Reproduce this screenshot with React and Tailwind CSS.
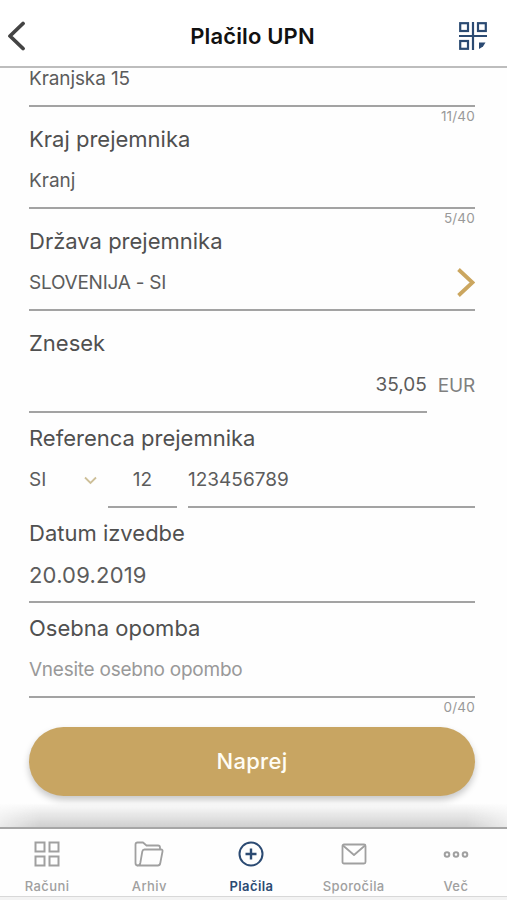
import React, { useState } from 'react';
import clsx from 'clsx';

const QrIcon = () => (
  <svg width="28" height="28" viewBox="0 0 28 28" fill="none" stroke="#2b4a72" strokeWidth="2.2">
    <rect x="1.2" y="1.2" width="7.800" height="7.800" />
    <rect x="19" y="1.2" width="7.800" height="7.800" />
    <rect x="1.2" y="19" width="7.800" height="7.800" />
    <path d="M14 0v28M0 14h28" />
    <path d="M20 20.5h6.500l-2.500 4l-4 2.500z" fill="#2b4a72" stroke="none" />
  </svg>
);

const GridIcon = () => (
  <svg width="26" height="26" viewBox="0 0 26 26" fill="none" stroke="currentColor" strokeWidth="2">
    <rect x="1.500" y="1.500" width="9" height="9" />
    <rect x="15.500" y="1.500" width="9" height="9" />
    <rect x="1.500" y="15.500" width="9" height="9" />
    <rect x="15.500" y="15.500" width="9" height="9" />
  </svg>
);

const FolderIcon = () => (
  <svg width="30" height="26" viewBox="0 0 30 26" fill="none" stroke="currentColor" strokeWidth="1.800" strokeLinejoin="round">
    <path d="M4 24.500C2 24.500 1.500 23.500 1.500 22V3.500C1.500 2 2.200 1.500 3.500 1.500H9L12.500 4.500H24C25.500 4.500 26 5.200 26 6.500V8.500" />
    <path d="M4 24.500C5.500 24.500 6 23.500 6.300 22L8.300 10.500C8.600 9 9 8.500 10.500 8.500H27C28.300 8.500 28.800 9.200 28.500 10.500L26.300 22C26 23.800 25.300 24.500 23.800 24.500Z" />
  </svg>
);

const PlusIcon = () => (
  <svg width="26" height="26" viewBox="0 0 26 26" fill="none" stroke="currentColor" strokeWidth="2">
    <circle cx="13" cy="13" r="11.500" />
    <path d="M13 7.500v11M7.500 13h11" strokeWidth="2.400" />
  </svg>
);

const MailIcon = () => (
  <svg width="26" height="26" viewBox="0 0 26 26" fill="none" stroke="currentColor" strokeWidth="1.800" strokeLinejoin="round">
    <rect x="1.500" y="3.500" width="23" height="19" rx="1.500" />
    <path d="M2 4.500L13 14L24 4.500" />
  </svg>
);

const DotsIcon = () => (
  <svg width="26" height="26" viewBox="0 0 26 26" fill="none" stroke="currentColor" strokeWidth="2">
    <circle cx="4" cy="13.500" r="2.300" />
    <circle cx="13" cy="13.500" r="2.300" />
    <circle cx="22" cy="13.500" r="2.300" />
  </svg>
);

const tabs = [
  { id: 'racuni', label: 'Računi', icon: GridIcon },
  { id: 'arhiv', label: 'Arhiv', icon: FolderIcon },
  { id: 'placila', label: 'Plačila', icon: PlusIcon },
  { id: 'sporocila', label: 'Sporočila', icon: MailIcon },
  { id: 'vec', label: 'Več', icon: DotsIcon },
];

const Label = ({ children, className }) => (
  <div className={clsx('h-[28px] leading-[28px] text-[22px] text-[#505050] whitespace-nowrap', className)}>{children}</div>
);

const Value = ({ children, className }) => (
  <div className={clsx('flex items-center h-[56px] pt-[2px] border-b-2 border-[#a3a3a3] whitespace-nowrap', className)}>
    {children}
  </div>
);

const Counter = ({ children }) => (
  <div className="h-[18px] leading-[18px] text-right text-[13.5px] tracking-[0.2px] text-[#999999]">{children}</div>
);

const App = () => {
  const [activeTab, setActiveTab] = useState('placila');

  return (
    <div className="w-[507px] h-[900px] flex flex-col overflow-hidden bg-[#fefefe] font-['Inter',sans-serif]">
      {/* Header */}
      <header className="h-[68px] shrink-0 grid grid-cols-[1fr_auto_1fr] items-center pt-[6px] pl-[7px] pr-5 bg-white border-b-2 border-[#bdbdbd]">
        <button className="justify-self-start">
          <svg width="20" height="30" viewBox="0 0 20 30" fill="none" stroke="#444444" strokeWidth="3.800" strokeLinecap="round" strokeLinejoin="round">
            <path d="M16 2.500L3 15L16 27.500" />
          </svg>
        </button>
        <h1 className="pl-[11px] text-[22px] font-semibold tracking-[0.15px] text-[#111111]">Plačilo UPN</h1>
        <button className="justify-self-end pb-px"><QrIcon /></button>
      </header>

      {/* Payment form */}
      <main className="flex-1 min-h-0 pl-[29px] pr-[32px] text-[19px] text-[#5c5c5c]">
        <Value className="-mt-[17px] tracking-[-0.1px]">Kranjska 15</Value>
        <Counter>11/40</Counter>

        <Label>Kraj prejemnika</Label>
        <Value>Kranj</Value>
        <Counter>5/40</Counter>

        <Label>Država prejemnika</Label>
        <Value className="justify-between tracking-[-0.25px]">
          SLOVENIJA - SI
          <svg width="18" height="30" viewBox="0 0 18 30" fill="none" stroke="#cba65f" strokeWidth="3.800">
            <path d="M1.500 1.500L15.500 14.500L1.500 27.500" />
          </svg>
        </Value>

        <Label className="mt-[18px]">Znesek</Label>
        <div className="flex">
          <Value className="flex-1 justify-end">35,05</Value>
          <div className="flex items-center h-[56px] pt-[2px] pl-[11px] tracking-[-0.2px] text-[#808080]">EUR</div>
        </div>

        <Label className="mt-[11px]">Referenca prejemnika</Label>
        <div className="flex">
          <div className="w-[79px] h-[56px] pt-[1px] flex items-center justify-between pr-[11px]">
            SI
            <svg width="13" height="9" viewBox="0 0 13 9" fill="none" stroke="#cdbf98" strokeWidth="1.800">
              <path d="M1 1.500L6.500 7L12 1.500" />
            </svg>
          </div>
          <Value className="w-[69px] justify-center">12</Value>
          <Value className="flex-1 ml-[11px]">123456789</Value>
        </div>

        <Label className="mt-[11px]">Datum izvedbe</Label>
        <Value className="text-[22px] tracking-[0.2px]">20.09.2019</Value>

        <Label className="mt-[11px]">Osebna opomba</Label>
        <Value className="tracking-[-0.25px] text-[#999999]">Vnesite osebno opombo</Value>
        <Counter>0/40</Counter>

        <button className="mt-[11px] w-full h-[69px] rounded-full bg-[#c8a562] text-[22px] font-medium tracking-[0.3px] text-[#fffdf5] shadow-[0_4px_7px_rgba(0,0,0,0.22)]">
          Naprej
        </button>
      </main>

      {/* Fade above the tab bar */}
      <div className="h-[24px] shrink-0 bg-linear-to-b from-transparent to-[#cfcfcf] [mask-image:linear-gradient(to_right,rgba(0,0,0,0.4),black_8%,black_92%,rgba(0,0,0,0.4))]" />

      <nav className="h-[70px] shrink-0 grid grid-cols-5 -ml-1 bg-[#fefefe] border-t-2 border-[#a6a6a6] border-b border-b-[#d8d8d8]">
        {tabs.map(({ id, label, icon: Icon }) => (
          <button
            key={id}
            onClick={() => setActiveTab(id)}
            className={clsx('flex flex-col items-center pt-[12px]', activeTab === id ? 'text-[#2b4a72] font-semibold' : 'text-[#a0a0a0] font-medium')}
          >
            <Icon />
            <span className="mt-[9px] text-[13px] leading-[20px] tracking-[0.4px]">{label}</span>
          </button>
        ))}
      </nav>
      <div className="h-[3px] shrink-0 bg-[#f3f3f3]" />
    </div>
  );
};

export default App;
